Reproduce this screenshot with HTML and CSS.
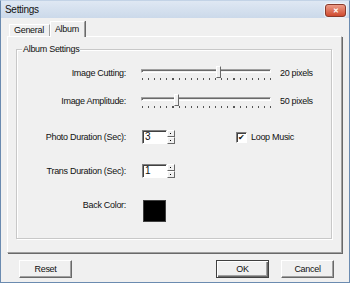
FILE: index.html
```html
<!DOCTYPE html>
<html lang="en">
<head>
    <meta charset="UTF-8">
    <title>Settings</title>
    <link rel="stylesheet" href="styles.css">
</head>
<body>
    <div class="window">
        <div class="titlebar">
            <span>Settings</span>
            <div class="close">&#x2715;</div>
        </div>

        <div class="content">
            <!-- Tabs -->
            <div class="tabs">
                <div class="tab">General</div>
                <div class="tab active">Album</div>
            </div>

            <div class="panel">
                <div class="group">
                    <span class="legend">Album Settings</span>

                    <div class="row">
                        <div class="label">Image Cutting:</div>
                        <div class="slider">
                            <div class="track"></div>
                            <div class="ticks"></div>
                            <div class="thumb" style="left: 75px;"></div>
                        </div>
                        <div class="value">20 pixels</div>
                    </div>

                    <div class="row r2">
                        <div class="label">Image Amplitude:</div>
                        <div class="slider">
                            <div class="track"></div>
                            <div class="ticks"></div>
                            <div class="thumb" style="left: 33px;"></div>
                        </div>
                        <div class="value">50 pixels</div>
                    </div>

                    <div class="row r3">
                        <div class="label">Photo Duration (Sec):</div>
                        <div class="spin">
                            <div class="spin-input">3</div>
                            <div class="spin-btns">
                                <div class="spin-btn"></div>
                                <div class="spin-btn"></div>
                            </div>
                        </div>
                        <div class="check"><span class="box">&#x2714;</span>Loop Music</div>
                    </div>

                    <div class="row r4">
                        <div class="label">Trans Duration (Sec):</div>
                        <div class="spin">
                            <div class="spin-input">1</div>
                            <div class="spin-btns">
                                <div class="spin-btn"></div>
                                <div class="spin-btn"></div>
                            </div>
                        </div>
                    </div>

                    <div class="row r5">
                        <div class="label">Back Color:</div>
                        <div class="swatch"></div>
                    </div>
                </div>
            </div>

            <div class="buttons">
                <button class="btn">Reset</button>
                <div class="spacer"></div>
                <button class="btn default">OK</button>
                <button class="btn">Cancel</button>
            </div>
        </div>
    </div>
</body>
</html>
```

FILE: styles.css
```css
body { margin: 0; font-family: "Liberation Sans", Arial, sans-serif; font-size: 9px; letter-spacing: -0.3px; color: #111; overflow: hidden; }
.window { width: 350px; height: 283px; box-sizing: border-box; background: #f0f0f0; border: 1px solid #6b8bb0; border-top-color: #c3d3e6; }

.titlebar { height: 17px; display: flex; align-items: center; justify-content: space-between; padding: 0 3px 0 4px; background: linear-gradient(#dfe8f3, #cbd9ea); font-size: 10px; }
.close { width: 19px; height: 11px; margin-top: 2px; border: 1px solid #8a3a2a; border-radius: 3px; background: linear-gradient(#ec9c88, #cf4a2f); box-shadow: 0 0 0 1px rgba(255, 255, 255, 0.6); color: #fff; font-size: 7px; line-height: 11px; text-align: center; font-weight: bold; letter-spacing: 0; }

.content { padding: 3px 7px 0 6px; }

.tabs { display: flex; align-items: flex-end; height: 15px; padding-left: 2px; position: relative; z-index: 1; }
.tab { height: 11px; line-height: 11px; padding: 0 5px 0 4px; border: 1px solid #fff; border-right-color: #a0a0a0; border-bottom: none; }
.tab.active { height: 15px; line-height: 14px; margin-bottom: -1px; background: #f0f0f0; box-shadow: 1px 0 0 #696969; }

.panel { width: 325px; height: 203px; border: 1px solid #fff; border-right-color: #a0a0a0; border-bottom-color: #a0a0a0; box-shadow: 1px 1px 0 #696969; padding: 12px 0 0 8px; }

.group { position: relative; width: 314px; height: 176px; border: 1px solid #c8c8c8; box-shadow: inset 1px 1px 0 #fff, 1px 1px 0 #fff; padding-top: 12px; }
.legend { position: absolute; top: -6px; left: 5px; background: #f0f0f0; padding: 0 1px; line-height: 11px; }

.row { display: flex; align-items: center; height: 22px; }
.r2 { margin-top: 6px; }
.r3 { margin-top: 14px; }
.r4 { margin-top: 12px; }
.r5 { margin-top: 17px; align-items: flex-start; }
.label { width: 109px; text-align: right; flex-shrink: 0; }
.r5 .label { line-height: 12px; }

.slider { position: relative; width: 130px; height: 16px; margin-left: 15px; }
.track { position: absolute; top: 4px; left: 0; right: 0; height: 2px; border: 1px solid #a0a0a0; border-right-color: #fff; border-bottom-color: #fff; box-shadow: inset 1px 1px 0 #696969; }
.ticks { position: absolute; top: 13px; left: 1px; right: 0; height: 2px; background: repeating-linear-gradient(90deg, #555 0, #555 1px, transparent 1px, transparent 6.1px); }
.thumb { position: absolute; top: 1px; width: 3px; height: 10px; background: #f0f0f0; border: 1px solid #fff; border-right-color: #696969; border-bottom-color: #696969; }
.value { margin-left: 9px; }

.spin { display: flex; margin-left: 16px; }
.spin-input { width: 21px; height: 12px; line-height: 12px; padding-left: 2px; background: #fff; border: 1px solid #808080; border-right-color: #fff; border-bottom-color: #fff; box-shadow: inset 1px 1px 0 #404040; font-size: 10px; }
.spin-btns { display: flex; flex-direction: column; }
.spin-btn { position: relative; width: 6px; height: 5px; background: #f0f0f0; border: 1px solid #fff; border-right-color: #696969; border-bottom-color: #696969; }
.spin-btn::after { content: ""; position: absolute; left: 2px; top: 2px; width: 1px; height: 1px; background: #000; }

.check { display: flex; align-items: center; margin-left: 61px; }
.box { width: 9px; height: 9px; line-height: 9px; margin-right: 4px; background: #fff; border: 1px solid #808080; border-right-color: #fff; border-bottom-color: #fff; box-shadow: inset 1px 1px 0 #404040; font-size: 8px; text-align: center; letter-spacing: 0; }

.swatch { width: 23px; height: 22px; margin: 1px 0 0 17px; background: #000; border: 1px solid #404040; box-sizing: border-box; }

.buttons { display: flex; margin-top: 7px; padding: 0 8px 0 12px; gap: 12px; }
.spacer { flex: 1; }
.btn { width: 53px; height: 18px; padding: 0; font: inherit; letter-spacing: -0.3px; color: #111; background: #f0f0f0; border: 1px solid #fff; border-right-color: #696969; border-bottom-color: #696969; box-shadow: inset -1px -1px 0 #a0a0a0; }
.btn.default { border: 1px solid #404040; box-shadow: inset 1px 1px 0 #fff, inset -1px -1px 0 #696969, inset -2px -2px 0 #a0a0a0; }
```
